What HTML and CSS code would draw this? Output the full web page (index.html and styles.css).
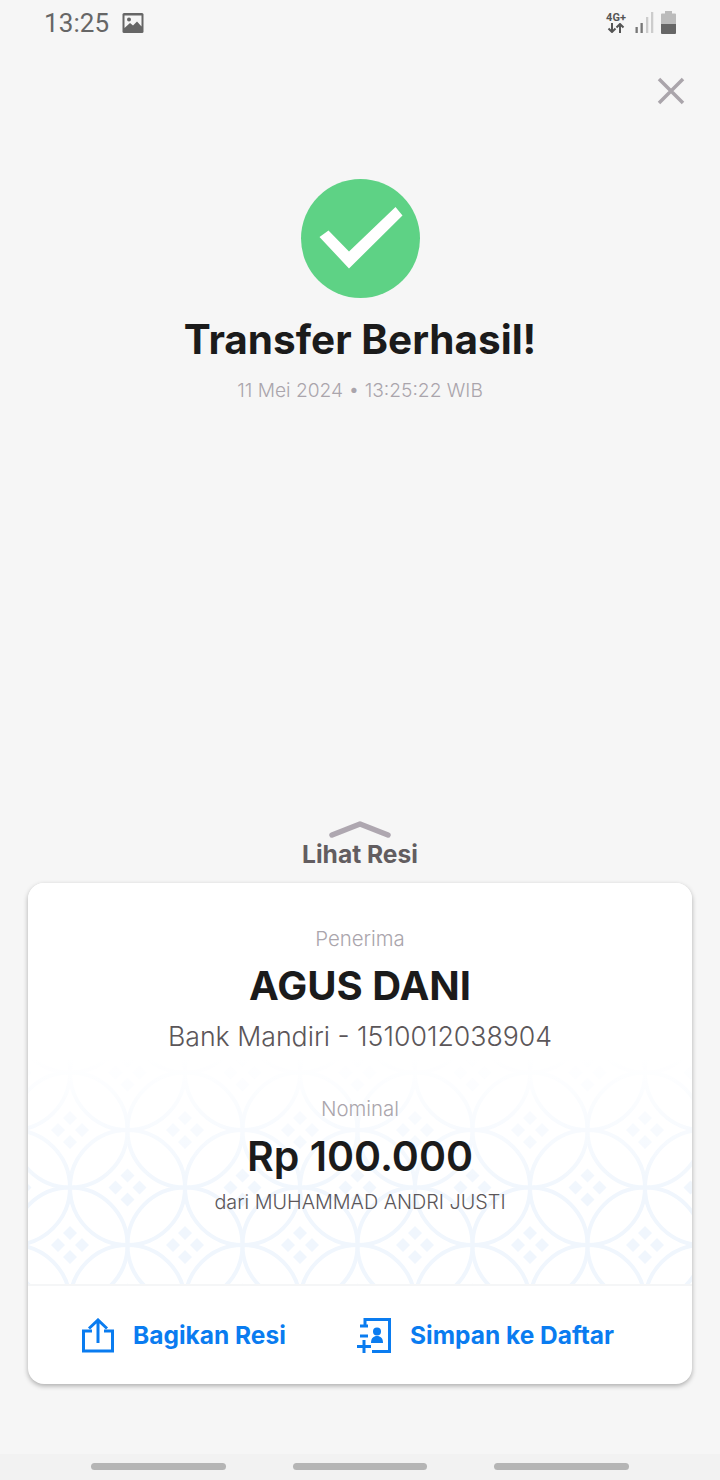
FILE: index.html
```html
<!DOCTYPE html>
<html lang="en">
<head>
    <meta charset="UTF-8">
    <title>Transfer Berhasil</title>
    <link rel="stylesheet" href="styles.css">
</head>
<body>
    <div class="screen">
        <div class="status-bar">
            <div class="status-left">
                <span class="clock">13:25</span>
                <svg class="picture-icon" width="22" height="20" viewBox="0 0 22 20">
                    <rect width="21" height="20" x="0.5" rx="1.5" fill="#666"/>
                    <path d="M2.5 2.5h17v11l-4.500-5-4 4-3-2.500-5.500 5z" fill="#f6f6f6"/>
                    <circle cx="7" cy="6.500" r="2" fill="#666"/>
                </svg>
            </div>
            <div class="status-right">
                <div class="network">
                    <span class="network-label">4G+</span>
                    <svg width="18" height="10" viewBox="0 0 18 10">
                        <path d="M5 0v9M1.500 5.500 5 9l3.500-3.500M13 10V1M9.500 4.500 13 1l3.500 3.500" fill="none" stroke="#555" stroke-width="2"/>
                    </svg>
                </div>
                <svg class="signal" width="19" height="21" viewBox="0 0 19 21">
                    <rect x="0.500" y="15" width="2.300" height="6" fill="#777"/>
                    <rect x="5.500" y="11" width="2.300" height="10" fill="#777"/>
                    <rect x="11" y="5" width="2.300" height="16" fill="#ccc"/>
                    <rect x="16" y="0" width="2.300" height="21" fill="#ccc"/>
                </svg>
                <svg class="battery" width="15" height="23" viewBox="0 0 15 23">
                    <path d="M4 0h7v2.500h3a1 1 0 0 1 1 1V13H0V3.500a1 1 0 0 1 1-1h3z" fill="#bbb"/>
                    <path d="M0 13h15v9a1 1 0 0 1-1 1H1a1 1 0 0 1-1-1z" fill="#666"/>
                </svg>
            </div>
        </div>

        <div class="close-row">
            <svg width="28" height="28" viewBox="0 0 28 28">
                <path d="M2 2l24 24M26 2 2 26" stroke="#aaa5ab" stroke-width="3.500" fill="none"/>
            </svg>
        </div>

        <div class="result">
            <svg class="check" width="119" height="119" viewBox="0 0 119 119">
                <circle cx="59.500" cy="59.500" r="59.500" fill="#5ed285"/>
                <path d="M18.500 58l9-6.500 20.500 21 46.500-44.500 7 8.500L48 89.500z" fill="#fff"/>
            </svg>
            <h1 class="title">Transfer Berhasil!</h1>
            <p class="timestamp">11 Mei 2024 • 13:25:22 WIB</p>
        </div>

        <div class="receipt-toggle">
            <svg width="62" height="18" viewBox="0 0 62 18">
                <path d="M3 14 31 3l28 11" fill="none" stroke="#aea7b0" stroke-width="5.500" stroke-linecap="round" stroke-linejoin="round"/>
            </svg>
            <span class="toggle-label">Lihat Resi</span>
        </div>

        <div class="card">
            <div class="card-body">
                <p class="caption">Penerima</p>
                <p class="name">AGUS DANI</p>
                <p class="bank">Bank Mandiri - 1510012038904</p>
                <p class="caption caption-nominal">Nominal</p>
                <p class="amount">Rp 100.000</p>
                <p class="sender">dari MUHAMMAD ANDRI JUSTI</p>
            </div>
            <div class="card-actions">
                <div class="action action-share">
                    <svg width="32" height="35" viewBox="0 0 32 35">
                        <path d="M10 13H1.500v20h29V13H22" fill="none" stroke="#0a7cf0" stroke-width="3"/>
                        <path d="M16 25V3M7 10.500l9-8.500 9 8.500" fill="none" stroke="#0a7cf0" stroke-width="3"/>
                    </svg>
                    <span>Bagikan Resi</span>
                </div>
                <div class="action action-save">
                    <svg width="34" height="35" viewBox="0 0 34 35">
                        <path d="M8 8V1.500h24.500v32H15" fill="none" stroke="#0a7cf0" stroke-width="3"/>
                        <path d="M3 8h8M3 18h8M0 28.500h14M7 22v13" fill="none" stroke="#0a7cf0" stroke-width="3"/>
                        <circle cx="20" cy="13.500" r="4" fill="#0a7cf0"/>
                        <path d="M14 25c0-5 2.500-7 6-7s6 2 6 7z" fill="#0a7cf0"/>
                    </svg>
                    <span>Simpan ke Daftar</span>
                </div>
            </div>
        </div>

        <div class="nav-bar">
            <span class="nav-pill"></span>
            <span class="nav-pill"></span>
            <span class="nav-pill"></span>
        </div>
    </div>
</body>
</html>
```

FILE: styles.css
```css
* {
    box-sizing: border-box;
}

body {
    margin: 0;
    background-color: #f6f6f6;
    font-family: Inter, "Liberation Sans", sans-serif;
}

p,
h1 {
    margin: 0;
}

.screen {
    display: flex;
    flex-direction: column;
    width: 720px;
    height: 1480px;
    overflow: hidden;
}

/* status bar */
.status-bar {
    display: flex;
    justify-content: space-between;
    align-items: flex-start;
    height: 46px;
    padding: 11px 44px 0 44px;
}

.status-left {
    display: flex;
    align-items: center;
    gap: 13px;
}

.clock {
    font-family: Roboto, sans-serif;
    font-size: 26px;
    line-height: 24px;
    color: #666;
    letter-spacing: 0.1px;
}

.status-right {
    display: flex;
    align-items: flex-start;
    gap: 7px;
}

.network {
    display: flex;
    flex-direction: column;
    align-items: center;
    width: 22px;
    padding-top: 1px;
    margin-right: 1px;
}

.network-label {
    font-family: Roboto, sans-serif;
    font-size: 11px;
    font-weight: 700;
    line-height: 11px;
    color: #555;
}

.signal {
    margin-top: 1px;
}

/* close button */
.close-row {
    display: flex;
    justify-content: flex-end;
    height: 133px;
    padding: 31px 35px 0 0;
}

/* success header */
.result {
    display: flex;
    flex-direction: column;
    align-items: center;
    height: 642px;
}

.check {
    flex-shrink: 0;
}

.title {
    margin-top: 19px;
    font-size: 40.500px;
    line-height: 46px;
    font-weight: 700;
    color: #1b1b1b;
}

.timestamp {
    margin-top: 15px;
    font-size: 19.200px;
    line-height: 24px;
    font-weight: 300;
    color: #aaa5ac;
}

/* receipt */
.receipt-toggle {
    display: flex;
    flex-direction: column;
    align-items: center;
    height: 62px;
}

.toggle-label {
    margin-top: 1px;
    font-size: 24.600px;
    line-height: 28px;
    font-weight: 700;
    color: #625d60;
}

.card {
    display: flex;
    flex-direction: column;
    width: 664px;
    height: 501px;
    margin: 0 28px;
    background-color: #fff;
    border-radius: 16px;
    box-shadow: 0 2px 5px rgba(0, 0, 0, 0.3);
    overflow: hidden;
}

.card-body {
    display: flex;
    flex-direction: column;
    align-items: center;
    height: 403px;
    padding-top: 43px;
    border-bottom: 2px solid #f5f6f7;
    background-image:
        linear-gradient(#fff 175px, rgba(255, 255, 255, 0) 315px),
        url("data:image/svg+xml,%3Csvg xmlns='http://www.w3.org/2000/svg' xmlns:xlink='http://www.w3.org/1999/xlink' width='115' height='115'%3E%3Cdefs%3E%3Cpath id='c' d='M0-19l7 7-7 7-7-7zM0 5l7 7-7 7-7-7zM-12-7l7 7-7 7-7-7zM12-7l7 7-7 7-7-7z' fill='%23f0f6fd'/%3E%3C/defs%3E%3Cg fill='none' stroke='%23f0f6fd' stroke-width='4'%3E%3Ccircle cx='0' cy='0' r='57.500'/%3E%3Ccircle cx='115' cy='0' r='57.500'/%3E%3Ccircle cx='0' cy='115' r='57.500'/%3E%3Ccircle cx='115' cy='115' r='57.500'/%3E%3Ccircle cx='57.500' cy='57.500' r='57.500'/%3E%3C/g%3E%3Cuse xlink:href='%23c' x='0' y='0'/%3E%3Cuse xlink:href='%23c' x='115' y='0'/%3E%3Cuse xlink:href='%23c' x='0' y='115'/%3E%3Cuse xlink:href='%23c' x='115' y='115'/%3E%3Cuse xlink:href='%23c' x='57.500' y='57.500'/%3E%3C/svg%3E");
    background-size: 100% 100%, 115px 115px;
    background-position: 0 0, 42px 17px;
    background-repeat: no-repeat, repeat;
}

.caption {
    font-size: 20.400px;
    line-height: 26px;
    font-weight: 300;
    color: #aaa5ac;
}

.caption-nominal {
    margin-top: 44px;
}

.name {
    margin-top: 10px;
    font-size: 40px;
    line-height: 48px;
    font-weight: 700;
    color: #1b1b1b;
}

.bank {
    margin-top: 10px;
    font-size: 26.700px;
    line-height: 32px;
    font-weight: 300;
    color: #5b5659;
}

.amount {
    margin-top: 10px;
    font-size: 41px;
    line-height: 48px;
    font-weight: 600;
    color: #1b1b1b;
}

.sender {
    margin-top: 9px;
    font-size: 19.800px;
    line-height: 26px;
    font-weight: 300;
    color: #5b5659;
}

.card-actions {
    display: flex;
    align-items: center;
    flex: 1;
    padding-left: 54px;
}

.action {
    display: flex;
    align-items: center;
    font-size: 24.500px;
    font-weight: 700;
    color: #0a7cf0;
}

.action-share {
    gap: 19px;
    width: 275px;
}

.action-save {
    gap: 19px;
}

/* nav bar */
.nav-bar {
    display: flex;
    gap: 67px;
    height: 26px;
    margin-top: 70px;
    padding: 9px 0 0 91px;
    background-color: #f2f2f2;
}

.nav-pill {
    width: 134.500px;
    height: 7px;
    border-radius: 4px;
    background-color: #b5b5b5;
}
```
